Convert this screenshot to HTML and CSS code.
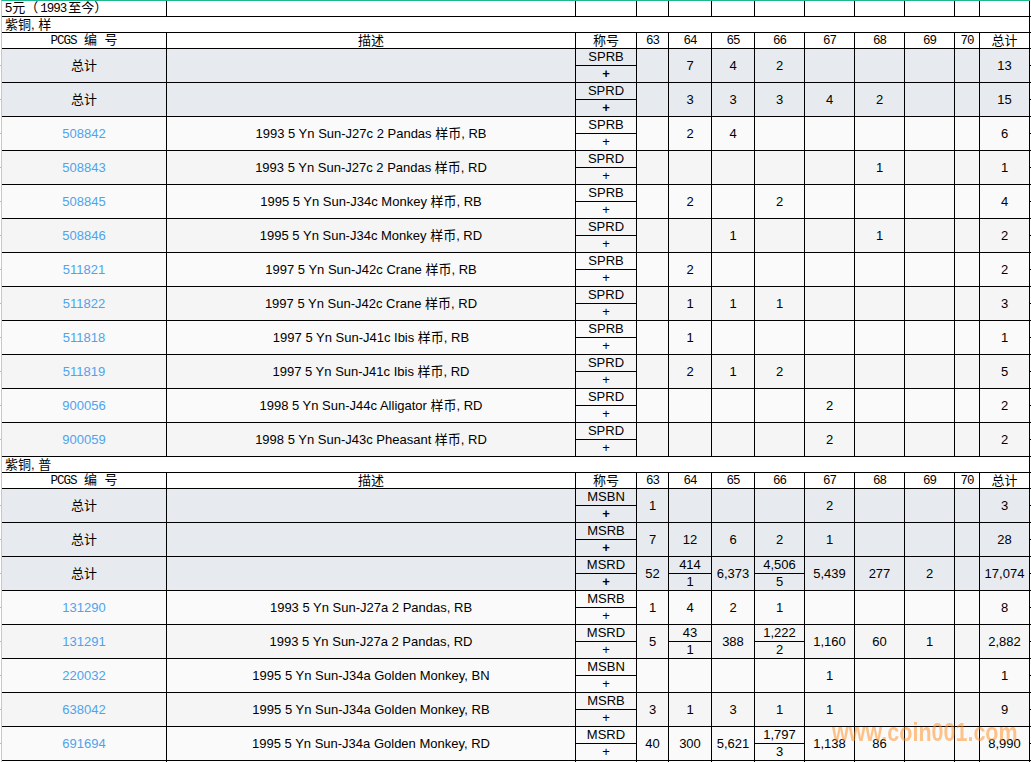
FILE: index.html
```html
<!DOCTYPE html>
<html lang="zh">
<head>
<meta charset="utf-8">
<title>PCGS 5元</title>
<link rel="stylesheet" href="styles.css">
</head>
<body>
<table class="pop">
<colgroup><col class="c-id"><col class="c-desc"><col class="c-des"><col class="c-63"><col class="c-n"><col class="c-n"><col class="c-w"><col class="c-w"><col class="c-w"><col class="c-w"><col class="c-70"><col class="c-w"></colgroup>
<tbody>
<tr class="plain"><td class="left">5元（<span class="mono yr">1993</span>至今）</td><td></td><td></td><td></td><td></td><td></td><td></td><td></td><td></td><td></td><td></td><td></td></tr>
<tr class="plain"><td colspan="12" class="left">紫铜, 样</td></tr>
<tr class="plain head"><td><span class="mono">PCGS&nbsp;</span>编<span class="mono">&nbsp;</span>号</td><td>描述</td><td>称号</td><td class="mono">63</td><td class="mono">64</td><td class="mono">65</td><td class="mono">66</td><td class="mono">67</td><td class="mono">68</td><td class="mono">69</td><td class="mono">70</td><td>总计</td></tr>

<tr class="total"><td rowspan="2" class="cjk">总计</td><td rowspan="2"></td><td class="grade">SPRB</td><td rowspan="2"></td><td rowspan="2">7</td><td rowspan="2">4</td><td rowspan="2">2</td><td rowspan="2"></td><td rowspan="2"></td><td rowspan="2"></td><td rowspan="2"></td><td rowspan="2">13</td></tr>
<tr class="total"><td class="plus">+</td></tr>
<tr class="total"><td rowspan="2" class="cjk">总计</td><td rowspan="2"></td><td class="grade">SPRD</td><td rowspan="2"></td><td rowspan="2">3</td><td rowspan="2">3</td><td rowspan="2">3</td><td rowspan="2">4</td><td rowspan="2">2</td><td rowspan="2"></td><td rowspan="2"></td><td rowspan="2">15</td></tr>
<tr class="total"><td class="plus">+</td></tr>

<tr class="odd"><td rowspan="2" class="pid">508842</td><td rowspan="2">1993 5 Yn Sun-J27c 2 Pandas 样币, RB</td><td class="grade">SPRB</td><td rowspan="2"></td><td rowspan="2">2</td><td rowspan="2">4</td><td rowspan="2"></td><td rowspan="2"></td><td rowspan="2"></td><td rowspan="2"></td><td rowspan="2"></td><td rowspan="2">6</td></tr>
<tr class="odd"><td>+</td></tr>
<tr class="even"><td rowspan="2" class="pid">508843</td><td rowspan="2">1993 5 Yn Sun-J27c 2 Pandas 样币, RD</td><td class="grade">SPRD</td><td rowspan="2"></td><td rowspan="2"></td><td rowspan="2"></td><td rowspan="2"></td><td rowspan="2"></td><td rowspan="2">1</td><td rowspan="2"></td><td rowspan="2"></td><td rowspan="2">1</td></tr>
<tr class="even"><td>+</td></tr>
<tr class="odd"><td rowspan="2" class="pid">508845</td><td rowspan="2">1995 5 Yn Sun-J34c Monkey 样币, RB</td><td class="grade">SPRB</td><td rowspan="2"></td><td rowspan="2">2</td><td rowspan="2"></td><td rowspan="2">2</td><td rowspan="2"></td><td rowspan="2"></td><td rowspan="2"></td><td rowspan="2"></td><td rowspan="2">4</td></tr>
<tr class="odd"><td>+</td></tr>
<tr class="even"><td rowspan="2" class="pid">508846</td><td rowspan="2">1995 5 Yn Sun-J34c Monkey 样币, RD</td><td class="grade">SPRD</td><td rowspan="2"></td><td rowspan="2"></td><td rowspan="2">1</td><td rowspan="2"></td><td rowspan="2"></td><td rowspan="2">1</td><td rowspan="2"></td><td rowspan="2"></td><td rowspan="2">2</td></tr>
<tr class="even"><td>+</td></tr>
<tr class="odd"><td rowspan="2" class="pid">511821</td><td rowspan="2">1997 5 Yn Sun-J42c Crane 样币, RB</td><td class="grade">SPRB</td><td rowspan="2"></td><td rowspan="2">2</td><td rowspan="2"></td><td rowspan="2"></td><td rowspan="2"></td><td rowspan="2"></td><td rowspan="2"></td><td rowspan="2"></td><td rowspan="2">2</td></tr>
<tr class="odd"><td>+</td></tr>
<tr class="even"><td rowspan="2" class="pid">511822</td><td rowspan="2">1997 5 Yn Sun-J42c Crane 样币, RD</td><td class="grade">SPRD</td><td rowspan="2"></td><td rowspan="2">1</td><td rowspan="2">1</td><td rowspan="2">1</td><td rowspan="2"></td><td rowspan="2"></td><td rowspan="2"></td><td rowspan="2"></td><td rowspan="2">3</td></tr>
<tr class="even"><td>+</td></tr>
<tr class="odd"><td rowspan="2" class="pid">511818</td><td rowspan="2">1997 5 Yn Sun-J41c Ibis 样币, RB</td><td class="grade">SPRB</td><td rowspan="2"></td><td rowspan="2">1</td><td rowspan="2"></td><td rowspan="2"></td><td rowspan="2"></td><td rowspan="2"></td><td rowspan="2"></td><td rowspan="2"></td><td rowspan="2">1</td></tr>
<tr class="odd"><td>+</td></tr>
<tr class="even"><td rowspan="2" class="pid">511819</td><td rowspan="2">1997 5 Yn Sun-J41c Ibis 样币, RD</td><td class="grade">SPRD</td><td rowspan="2"></td><td rowspan="2">2</td><td rowspan="2">1</td><td rowspan="2">2</td><td rowspan="2"></td><td rowspan="2"></td><td rowspan="2"></td><td rowspan="2"></td><td rowspan="2">5</td></tr>
<tr class="even"><td>+</td></tr>
<tr class="odd"><td rowspan="2" class="pid">900056</td><td rowspan="2">1998 5 Yn Sun-J44c Alligator 样币, RD</td><td class="grade">SPRD</td><td rowspan="2"></td><td rowspan="2"></td><td rowspan="2"></td><td rowspan="2"></td><td rowspan="2">2</td><td rowspan="2"></td><td rowspan="2"></td><td rowspan="2"></td><td rowspan="2">2</td></tr>
<tr class="odd"><td>+</td></tr>
<tr class="even"><td rowspan="2" class="pid">900059</td><td rowspan="2">1998 5 Yn Sun-J43c Pheasant 样币, RD</td><td class="grade">SPRD</td><td rowspan="2"></td><td rowspan="2"></td><td rowspan="2"></td><td rowspan="2"></td><td rowspan="2">2</td><td rowspan="2"></td><td rowspan="2"></td><td rowspan="2"></td><td rowspan="2">2</td></tr>
<tr class="even"><td>+</td></tr>

<tr class="plain"><td colspan="12" class="left">紫铜, 普</td></tr>
<tr class="plain head"><td><span class="mono">PCGS&nbsp;</span>编<span class="mono">&nbsp;</span>号</td><td>描述</td><td>称号</td><td class="mono">63</td><td class="mono">64</td><td class="mono">65</td><td class="mono">66</td><td class="mono">67</td><td class="mono">68</td><td class="mono">69</td><td class="mono">70</td><td>总计</td></tr>

<tr class="total"><td rowspan="2" class="cjk">总计</td><td rowspan="2"></td><td class="grade">MSBN</td><td rowspan="2">1</td><td rowspan="2"></td><td rowspan="2"></td><td rowspan="2"></td><td rowspan="2">2</td><td rowspan="2"></td><td rowspan="2"></td><td rowspan="2"></td><td rowspan="2">3</td></tr>
<tr class="total"><td class="plus">+</td></tr>
<tr class="total"><td rowspan="2" class="cjk">总计</td><td rowspan="2"></td><td class="grade">MSRB</td><td rowspan="2">7</td><td rowspan="2">12</td><td rowspan="2">6</td><td rowspan="2">2</td><td rowspan="2">1</td><td rowspan="2"></td><td rowspan="2"></td><td rowspan="2"></td><td rowspan="2">28</td></tr>
<tr class="total"><td class="plus">+</td></tr>
<tr class="total"><td rowspan="2" class="cjk">总计</td><td rowspan="2"></td><td class="grade">MSRD</td><td rowspan="2">52</td><td class="grade">414</td><td rowspan="2">6,373</td><td class="grade">4,506</td><td rowspan="2">5,439</td><td rowspan="2">277</td><td rowspan="2">2</td><td rowspan="2"></td><td rowspan="2">17,074</td></tr>
<tr class="total"><td class="plus">+</td><td>1</td><td>5</td></tr>

<tr class="odd"><td rowspan="2" class="pid">131290</td><td rowspan="2">1993 5 Yn Sun-J27a 2 Pandas, RB</td><td class="grade">MSRB</td><td rowspan="2">1</td><td rowspan="2">4</td><td rowspan="2">2</td><td rowspan="2">1</td><td rowspan="2"></td><td rowspan="2"></td><td rowspan="2"></td><td rowspan="2"></td><td rowspan="2">8</td></tr>
<tr class="odd"><td>+</td></tr>
<tr class="even"><td rowspan="2" class="pid">131291</td><td rowspan="2">1993 5 Yn Sun-J27a 2 Pandas, RD</td><td class="grade">MSRD</td><td rowspan="2">5</td><td class="grade">43</td><td rowspan="2">388</td><td class="grade">1,222</td><td rowspan="2">1,160</td><td rowspan="2">60</td><td rowspan="2">1</td><td rowspan="2"></td><td rowspan="2">2,882</td></tr>
<tr class="even"><td>+</td><td>1</td><td>2</td></tr>
<tr class="odd"><td rowspan="2" class="pid">220032</td><td rowspan="2">1995 5 Yn Sun-J34a Golden Monkey, BN</td><td class="grade">MSBN</td><td rowspan="2"></td><td rowspan="2"></td><td rowspan="2"></td><td rowspan="2"></td><td rowspan="2">1</td><td rowspan="2"></td><td rowspan="2"></td><td rowspan="2"></td><td rowspan="2">1</td></tr>
<tr class="odd"><td>+</td></tr>
<tr class="even"><td rowspan="2" class="pid">638042</td><td rowspan="2">1995 5 Yn Sun-J34a Golden Monkey, RB</td><td class="grade">MSRB</td><td rowspan="2">3</td><td rowspan="2">1</td><td rowspan="2">3</td><td rowspan="2">1</td><td rowspan="2">1</td><td rowspan="2"></td><td rowspan="2"></td><td rowspan="2"></td><td rowspan="2">9</td></tr>
<tr class="even"><td>+</td></tr>
<tr class="odd"><td rowspan="2" class="pid">691694</td><td rowspan="2">1995 5 Yn Sun-J34a Golden Monkey, RD</td><td class="grade">MSRD</td><td rowspan="2">40</td><td rowspan="2">300</td><td rowspan="2">5,621</td><td class="grade">1,797</td><td rowspan="2">1,138</td><td rowspan="2">86</td><td rowspan="2"></td><td rowspan="2"></td><td rowspan="2">8,990</td></tr>
<tr class="odd"><td>+</td><td>3</td></tr>

<tr class="stub"><td></td><td></td><td></td><td></td><td></td><td></td><td></td><td></td><td></td><td></td><td></td><td></td></tr>
</tbody>
</table>
<div class="watermark">www.coin001.com</div>
</body>
</html>
```

FILE: styles.css
```css
html, body {
  margin: 0;
  padding: 0;
  background: #fff;
  overflow: hidden;
}
body {
  position: relative;
  height: 762px;
  font-family: "Liberation Sans", "Noto Sans CJK SC", sans-serif;
  font-size: 13px;
  color: #000;
}
/* clipped neighbouring cells at the window's edges */
body::before {
  content: "";
  position: absolute;
  left: 0;
  top: 0;
  width: 1px;
  height: 762px;
  background:
    repeating-linear-gradient(transparent 0 16px, #b9b9c4 16px 17px, transparent 17px 34px) 0 49px / 1px 408px no-repeat,
    repeating-linear-gradient(transparent 0 16px, #b9b9c4 16px 17px, transparent 17px 34px) 0 489px / 1px 273px no-repeat;
}
body::after {
  content: "";
  position: absolute;
  left: 1030px;
  top: 0;
  width: 1px;
  height: 762px;
  background:
    repeating-linear-gradient(transparent 0 15px, #000 15px 16px) 0 1px / 1px 48px no-repeat,
    repeating-linear-gradient(transparent 0 16px, #000 16px 17px) 0 49px / 1px 408px no-repeat,
    repeating-linear-gradient(transparent 0 15px, #000 15px 16px) 0 457px / 1px 32px no-repeat,
    repeating-linear-gradient(transparent 0 16px, #000 16px 17px) 0 489px / 1px 272px no-repeat;
}
.pop {
  width: 1029px;
  margin-left: 1px;
  table-layout: fixed;
  border-collapse: separate;
  border-spacing: 0;
  border-left: 1px solid #c6c6d6;
  border-top: 1px solid #1fb88a;
}
.c-id { width: 165px; }
.c-desc { width: 409px; }
.c-des { width: 61px; }
.c-63 { width: 32px; }
.c-n { width: 43px; }
.c-w { width: 50px; }
.c-70 { width: 25px; }
td {
  box-sizing: border-box;
  height: 17px;
  padding: 0;
  border-right: 1px solid #000;
  border-bottom: 1px solid #000;
  text-align: center;
  vertical-align: middle;
  line-height: 14px;
  white-space: nowrap;
  overflow: hidden;
}
.plain td {
  height: 16px;
  background: #fff;
}
.mono {
  font-family: "Liberation Mono", "Noto Sans CJK SC", monospace;
  font-size: 12.5px;
  letter-spacing: -1px;
  word-spacing: 1px;
}
.yr { padding: 0 2px; }
.left {
  text-align: left;
  padding-left: 3px;
}
.total td { background: #e7ebef; }
.odd td { background: #fafafa; }
.even td { background: #f5f5f5; }
.pid { color: #4fa3ec; }
.plus { font-weight: bold; }
.stub td {
  height: 1px;
  border-bottom: 0;
  line-height: 0;
}
.watermark {
  position: absolute;
  left: 832px;
  top: 720px;
  font-size: 21.5px;
  line-height: 26px;
  font-weight: bold;
  color: #ff8c1a;
  opacity: 0.5;
  white-space: nowrap;
  transform: scaleY(1.2);
  filter: blur(0.4px);
}
```
